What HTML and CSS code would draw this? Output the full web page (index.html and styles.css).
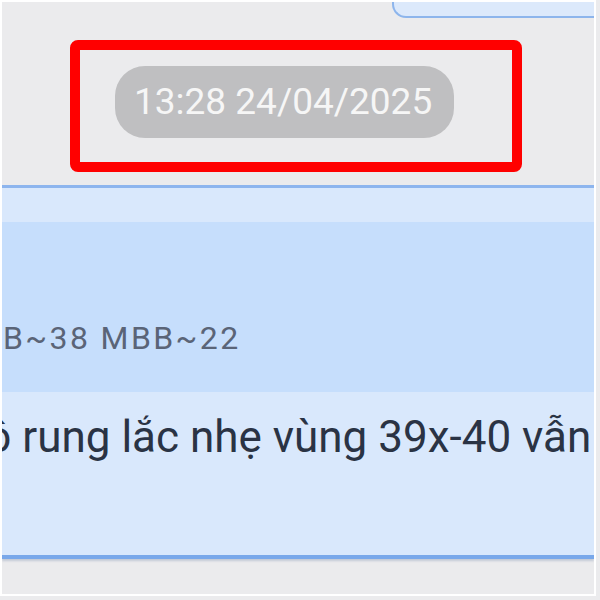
FILE: index.html
```html
<!DOCTYPE html>
<html lang="vi">
<head>
<meta charset="utf-8">
<title>Chat</title>
<link rel="stylesheet" href="styles.css">
</head>
<body>
<div class="frame">
  <div class="prev-bubble"></div>
  <div class="time-highlight">
    <div class="time-pill">13:28 24/04/2025</div>
  </div>
  <div class="message">
    <div class="msg-top"></div>
    <div class="msg-quote"><span class="quote-text">B~38 MBB~22</span></div>
    <div class="msg-body"><span class="body-text">độ rung lắc nhẹ vùng 39x-40 vẫn</span></div>
  </div>
</div>
</body>
</html>
```
FILE: styles.css
```css
html, body {
  margin: 0;
  padding: 0;
}
body {
  width: 600px;
  height: 600px;
  overflow: hidden;
  background: #ebebed;
  font-family: Roboto, "Noto Sans", sans-serif;
}
.frame {
  width: 592px;
  height: 592px;
  border: 2px solid #ffffff;
  overflow: hidden;
  display: flex;
  flex-direction: column;
  background: #ebebed;
}
.prev-bubble {
  margin-left: 390px;
  height: 14px;
  background: #dce9fb;
  border-left: 2px solid #8db5ec;
  border-bottom: 2px solid #8db5ec;
  border-bottom-left-radius: 14px;
}
.time-highlight {
  margin-top: 22px;
  margin-left: 68px;
  width: 397px;
  height: 96px;
  border: 10px solid #ff0000;
  border-radius: 8px;
  padding: 16px 0 0 35px;
  box-sizing: content-box;
}
.time-pill {
  display: inline-block;
  height: 72px;
  line-height: 72px;
  padding: 0 22px 0 19px;
  border-radius: 30px;
  background: #bfbfc1;
  color: #f6f6f6;
  font-size: 37px;
  white-space: nowrap;
}
.message {
  margin-top: 13px;
  border-top: 3px solid #8db5ee;
  border-bottom: 4px solid #79a8ea;
  background: #d9e8fc;
  box-shadow: 0 2px 2px rgba(120, 140, 170, 0.35);
  height: 367px;
  display: flex;
  flex-direction: column;
}
.msg-top {
  height: 34px;
}
.msg-quote {
  height: 170px;
  background: #c6defc;
  box-sizing: border-box;
  padding-top: 100px;
  white-space: nowrap;
}
.quote-text {
  display: block;
  margin-left: 1px;
  font-size: 32px;
  line-height: 32px;
  letter-spacing: 2.4px;
  color: #5a6477;
}
.msg-body {
  padding-top: 23px;
  white-space: nowrap;
}
.body-text {
  display: block;
  margin-left: -42px;
  font-size: 44px;
  line-height: 44px;
  color: #2a3344;
}
```
